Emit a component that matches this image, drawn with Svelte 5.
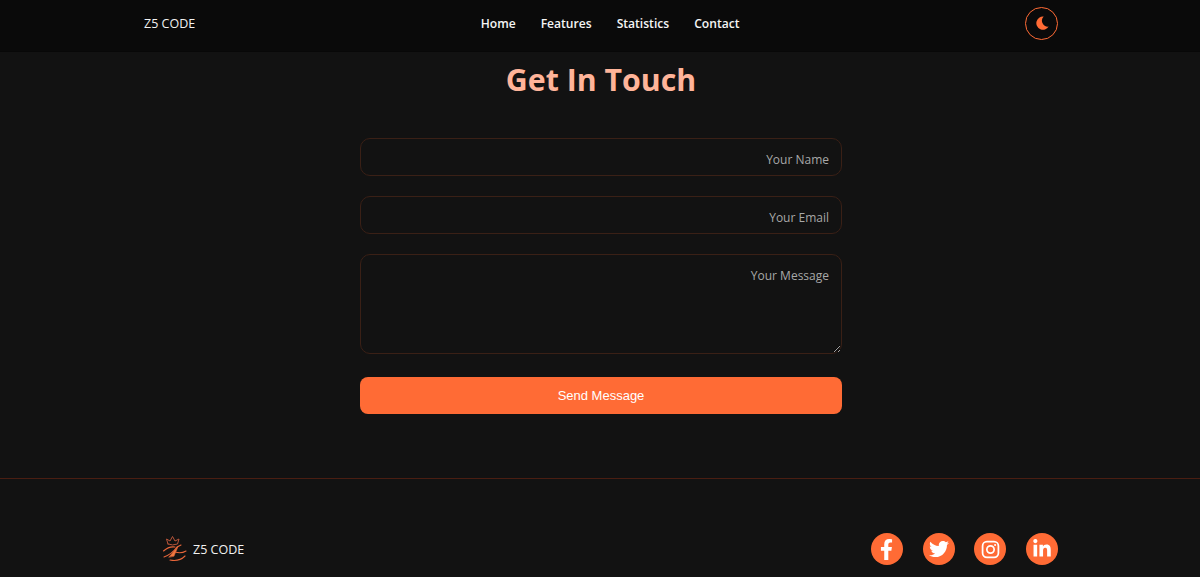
<script>
	const links = ['Home', 'Features', 'Statistics', 'Contact'];
</script>

<header class="topbar">
	<div class="brand">Z5 CODE</div>
	<nav class="links">
		{#each links as link}
			<span>{link}</span>
		{/each}
	</nav>
	<button class="theme" aria-label="Toggle theme">
		<svg viewBox="0 0 24 24" width="16" height="16"><path fill="#ff6b35" d="M14.5 2.2A10 10 0 1 0 22 17.4a9 9 0 0 1-7.5-15.2z"/></svg>
	</button>
</header>

<main class="contact">
	<h2>Get In Touch</h2>
	<form class="form">
		<input type="text" placeholder="Your Name" />
		<input type="email" placeholder="Your Email" />
		<textarea placeholder="Your Message"></textarea>
		<button type="button" class="send">Send Message</button>
	</form>
</main>

<footer class="footer">
	<div class="logo">
		<svg viewBox="0 0 24 27" width="24" height="27" fill="none" stroke="#e8663a" stroke-width="1.100" stroke-linecap="round" stroke-linejoin="round">
			<path d="M5 8 L3.500 3 L7 5 L9.500 0.500 L12 5 L16 3 L14.500 8 Q9.500 10 5 8z" stroke="#b8553a" stroke-width="1"/>
			<path d="M0.500 15 Q6 10 12 11" />
			<path d="M1 21 Q9 18 14 11 L18 9" />
			<path d="M6 21 L15 10.500 L11 20 z" fill="#f0793f" stroke-width="0.600" />
			<path d="M7 24 Q16 26 22 20" />
			<path d="M12 16 Q18 18 23 15" />
		</svg>
		<span>Z5 CODE</span>
	</div>
	<div class="socials">
		<span class="social"><svg viewBox="0 0 320 512" width="13" height="21"><path d="M279.14 288l14.22-92.66h-88.91v-60.13c0-25.35 12.42-50.06 52.24-50.06h40.42V6.26S260.43 0 225.36 0c-73.22 0-121.08 44.38-121.08 124.72v70.62H22.89V288h81.39v224h100.17V288z"/></svg></span>
		<span class="social"><svg viewBox="0 0 512 512" width="20" height="20"><path d="M459.37 151.716c.325 4.548.325 9.097.325 13.645 0 138.72-105.583 298.558-298.558 298.558-59.452 0-114.68-17.219-161.137-47.106 8.447.974 16.568 1.299 25.34 1.299 49.055 0 94.213-16.568 130.274-44.832-46.132-.975-84.792-31.188-98.112-72.772 6.498.974 12.995 1.624 19.818 1.624 9.421 0 18.843-1.3 27.614-3.573-48.081-9.747-84.143-51.98-84.143-102.985v-1.299c13.969 7.797 30.214 12.67 47.431 13.319-28.264-18.843-46.781-51.005-46.781-87.391 0-19.492 5.197-37.36 14.294-52.954 51.655 63.675 129.3 105.258 216.365 109.807-1.624-7.797-2.599-15.918-2.599-24.04 0-57.828 46.782-104.934 104.934-104.934 30.213 0 57.502 12.67 76.67 33.137 23.715-4.548 46.456-13.32 66.599-25.34-7.798 24.366-24.366 44.833-46.132 57.827 21.117-2.273 41.584-8.122 60.426-16.243-14.292 20.791-32.161 39.308-52.628 54.253z"/></svg></span>
		<span class="social"><svg class="outline" viewBox="0 0 24 24" width="19" height="19"><rect x="2" y="2" width="20" height="20" rx="5.500"/><circle cx="12" cy="12" r="4.600"/><circle class="dot" cx="17.800" cy="6.200" r="1.300"/></svg></span>
		<span class="social"><svg viewBox="0 0 448 512" width="18" height="20"><path d="M100.28 448H7.4V148.9h92.88zM53.79 108.1C24.09 108.1 0 83.5 0 53.8a53.79 53.79 0 0 1 107.58 0c0 29.7-24.1 54.3-53.79 54.3zM447.9 448h-92.68V302.4c0-34.7-.7-79.2-48.29-79.2-48.29 0-55.69 37.7-55.69 76.7V448h-92.78V148.9h89.08v40.8h1.3c12.4-23.5 42.69-48.3 87.88-48.3 94 0 111.28 61.9 111.28 142.3V448z"/></svg></span>
	</div>
</footer>

<style>
	:global(body) {
		background: #121212;
		color: #fff;
		font-family: "Open Sans", "Noto Sans", sans-serif;
		overflow: hidden;
	}
	.topbar {
		height: 52px;
		background: #0a0a0a;
		border-bottom: 1px solid #080808;
		box-sizing: border-box;
		padding: 0 142px 5px 144px;
		display: flex;
		justify-content: space-between;
		align-items: center;
	}
	.brand {
		font-size: 12.500px;
		color: #f2f2f2;
	}
	.links {
		display: flex;
		gap: 25px;
		font-size: 12.100px;
		font-weight: 600;
		color: #f5f5f5;
	}
	.theme {
		width: 33px;
		height: 33px;
		padding: 0;
		border-radius: 50%;
		border: 1px solid #ff6b35;
		background: transparent;
		display: flex;
		align-items: center;
		justify-content: center;
	}
	.contact {
		height: 427px;
		box-sizing: border-box;
		padding: 8px 0 0 2px;
		border-bottom: 1px solid #4a1e12;
	}
	h2 {
		margin: 0;
		text-align: center;
		font-size: 30.300px;
		line-height: 40px;
		font-weight: 700;
		color: #ffb499;
	}
	.form {
		width: 482px;
		margin: 38px auto 0;
		display: flex;
		flex-direction: column;
		gap: 20px;
	}
	input, textarea {
		box-sizing: border-box;
		width: 100%;
		background: #121212;
		border: 1px solid #3a2016;
		border-radius: 10px;
		color: #fff;
		padding: 0 12px;
		text-align: right;
		font: 12px "Open Sans", "Noto Sans", sans-serif;
		outline: none;
	}
	input {
		height: 38px;
		padding-top: 4px;
	}
	textarea {
		height: 100px;
		padding-top: 12px;
		resize: vertical;
		display: block;
	}
	input::placeholder, textarea::placeholder {
		color: #a8a8a8;
		opacity: 1;
	}
	.send {
		height: 37px;
		margin-top: 3px;
		border: none;
		border-radius: 8px;
		background: #ff6b35;
		color: #fff;
		font: 13px "Liberation Sans", Arial, sans-serif;
	}
	.footer {
		display: flex;
		justify-content: space-between;
		align-items: center;
		padding: 54px 142px 0 163px;
	}
	.logo {
		display: flex;
		align-items: center;
		gap: 6px;
		font-size: 12.500px;
		color: #f2f2f2;
	}
	.socials {
		display: flex;
		gap: 19.700px;
	}
	.social {
		width: 32px;
		height: 32px;
		border-radius: 50%;
		background: #ff6b35;
		display: flex;
		align-items: center;
		justify-content: center;
	}
	.social svg {
		fill: #fff;
	}
	.social .outline {
		fill: none;
		stroke: #fff;
		stroke-width: 2.200;
	}
	.social .dot {
		fill: #fff;
		stroke: none;
	}
</style>
